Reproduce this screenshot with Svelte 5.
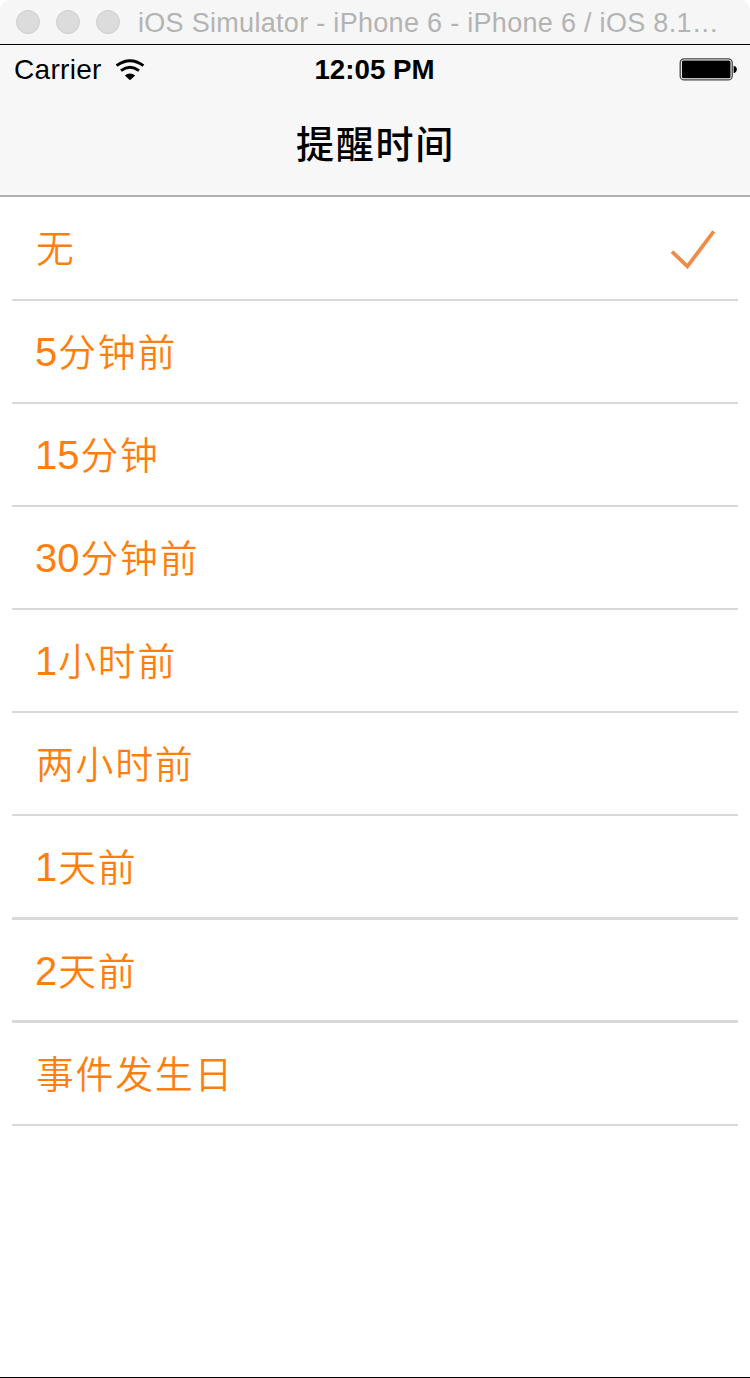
<script lang="ts">
	interface Option {
		id: string;
		count: string;
		text: string;
	}

	const windowTitle = 'iOS Simulator - iPhone 6 - iPhone 6 / iOS 8.1…';

	const options: Option[] = [
		{ id: 'none', count: '', text: '无' },
		{ id: 'm5', count: '5', text: '分钟前' },
		{ id: 'm15', count: '15', text: '分钟' },
		{ id: 'm30', count: '30', text: '分钟前' },
		{ id: 'h1', count: '1', text: '小时前' },
		{ id: 'h2', count: '', text: '两小时前' },
		{ id: 'd1', count: '1', text: '天前' },
		{ id: 'd2', count: '2', text: '天前' },
		{ id: 'day', count: '', text: '事件发生日' }
	];

	let selected = $state('none');
</script>

<div class="window">
	<div class="titlebar">
		<div class="lights">
			<span></span>
			<span></span>
			<span></span>
		</div>
		<div class="window-title">{windowTitle}</div>
	</div>

	<header>
		<div class="statusbar">
			<div class="carrier">
				<span>Carrier</span>
				<svg class="wifi" width="30" height="22" viewBox="0 0 30 22">
					<path d="M1.6 6.6 Q15 -3.2 28.4 6.6" fill="none" stroke="#000" stroke-width="3" />
					<path d="M6 11.6 Q15 4.9 24 11.6" fill="none" stroke="#000" stroke-width="3" />
					<path d="M9.8 16.4 Q15 12.4 20.2 16.4 L15 21.2 Z" />
				</svg>
			</div>
			<div class="time">12:05 PM</div>
			<div class="power">
				<svg width="58" height="23" viewBox="0 0 58 23">
					<rect x="1.2" y="0.9" width="52" height="21" rx="4" fill="#fff" stroke="#444" stroke-width="1.3" />
					<rect x="2.9" y="2.5" width="48.6" height="17.8" rx="1.6" />
					<path d="M54.6 7.8 Q57.8 8.6 57.8 11.4 Q57.8 14.3 54.6 15.1 Z" />
				</svg>
			</div>
		</div>
		<h1>提醒时间</h1>
	</header>

	<ul>
		{#each options as option (option.id)}
			<li>
				<button onclick={() => (selected = option.id)}>
					<span class="label">
						{#if option.count}<span class="count">{option.count}</span>{/if}<span class="text">{option.text}</span>
					</span>
					{#if selected === option.id}
						<svg class="check" width="46" height="40" viewBox="0 0 46 40">
							<path d="M2 22.6 L17.4 37.4 L43.8 2.4" fill="none" stroke="#ee8c4b" stroke-width="3.8" />
						</svg>
					{/if}
				</button>
			</li>
		{/each}
	</ul>
</div>

<style>
	:global(body) {
		background: #fff;
		font-family: 'Liberation Sans', 'Noto Sans CJK SC', sans-serif;
	}

	.window {
		box-sizing: border-box;
		width: 750px;
		height: 1378px;
		overflow: hidden;
		border-bottom: 1px solid #000;
	}

	/* ── Simulator window ── */
	.titlebar {
		box-sizing: border-box;
		height: 45px;
		display: flex;
		align-items: center;
		padding: 0 16px;
		background: #f6f6f6;
		border-bottom: 1px solid #000;
		border-radius: 10px 10px 0 0;
	}
	.lights {
		display: flex;
		gap: 16px;
	}
	.lights span {
		box-sizing: border-box;
		width: 24px;
		height: 24px;
		border: 1px solid #cfcfcf;
		border-radius: 50%;
		background: #dcdcdc;
	}
	.window-title {
		margin-left: 18px;
		padding-top: 2px;
		color: #b3b3b3;
		font-size: 27px;
		letter-spacing: 0.3px;
		line-height: 42px;
		white-space: nowrap;
	}

	/* ── Navigation bar ── */
	header {
		box-sizing: border-box;
		height: 152px;
		background: #f7f7f7;
		border-bottom: 2px solid #b0b0b0;
	}
	.statusbar {
		display: grid;
		grid-template-columns: 1fr auto 1fr;
		align-items: center;
		height: 49px;
		padding: 0 13px 0 14px;
		font-size: 28px;
	}
	.carrier {
		display: flex;
		align-items: center;
		gap: 13px;
		letter-spacing: 0.3px;
	}
	.time {
		font-size: 27.7px;
		font-weight: 700;
		transform: translateX(-1px);
	}
	.power {
		display: flex;
		justify-content: flex-end;
	}
	h1 {
		margin: 0;
		padding: 1px 0 0 1px;
		text-align: center;
		font-size: 38px;
		font-weight: 500;
		letter-spacing: 1.7px;
		line-height: 100px;
	}

	/* ── Options ── */
	ul {
		margin: 0;
		padding: 0 12px;
		list-style: none;
	}
	li {
		box-sizing: border-box;
		height: 103px;
		border-bottom: 2px solid #d9d9d9;
	}
	li:first-child {
		height: 104px;
	}
	li:nth-child(7) {
		height: 104px;
		border-bottom-width: 3px;
	}
	li:nth-child(8) {
		border-bottom-width: 3px;
	}
	button {
		display: flex;
		align-items: center;
		justify-content: space-between;
		width: 100%;
		height: 100%;
		padding: 2px 22px 0 24px;
		border: 0;
		background: none;
		color: #ff7f0e;
		font: inherit;
		font-size: 40px;
		cursor: pointer;
	}
	.label {
		display: flex;
		align-items: baseline;
		line-height: 60px;
	}
	.count {
		margin: 0 1px 0 -1px;
	}
	.text {
		font-size: 37.8px;
		font-weight: 350;
		letter-spacing: 1.8px;
	}
</style>
